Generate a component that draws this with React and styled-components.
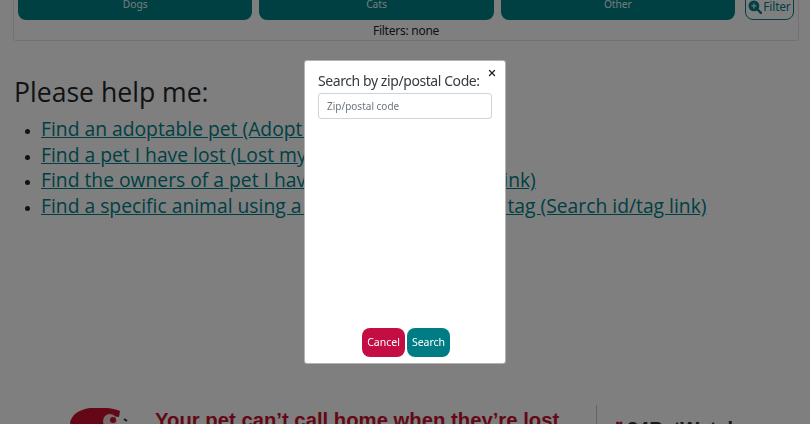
import styled, { createGlobalStyle } from 'styled-components'
import { X } from 'lucide-react'

const GlobalStyle = createGlobalStyle`
  html, body { margin: 0; padding: 0; height: 100%; overflow: hidden; background: #fff; }
  #root { height: 100%; }
  * { box-sizing: border-box; }
`

const Page = styled.div`
  width: 810px;
  height: 424px;
  overflow: hidden;
  font-family: "Noto Sans", sans-serif;
  color: #212529;
`

const FilterCard = styled.div`
  margin: -20px 11px 0 13px;
  height: 61px;
  border: 1px solid #dee2e6;
  border-radius: 3px;
  padding: 0 4px;
`

const TabRow = styled.div`
  display: flex;
  height: 39px;
  gap: 7px;
`

const Tab = styled.button`
  flex: 1;
  border: none;
  border-radius: 0 0 8px 8px;
  background: #008087;
  color: #f0f4f4;
  font: 400 10.2px/12px "Noto Sans", sans-serif;
  height: 39px;
  display: flex;
  justify-content: center;
  align-items: flex-start;
  padding: 17px 0 0;
`

const FilterButton = styled.button`
  width: 49px;
  height: 39px;
  margin-left: 3px;
  border: 1px solid #008087;
  border-radius: 0 0 8px 8px;
  background: transparent;
  color: #008087;
  font: 400 12px/14px "Noto Sans", sans-serif;
  letter-spacing: -0.2px;
  display: flex;
  align-items: flex-end;
  justify-content: center;
  gap: 1px;
  padding: 0 0 5px;
  white-space: nowrap;
`

const FilterStatus = styled.div`
  text-align: center;
  font: 400 12px/21px "Noto Sans", sans-serif;
  letter-spacing: -0.25px;
  color: #212529;
`

const Section = styled.section`
  padding: 33px 14px 0;
`

const Heading = styled.h2`
  margin: 0 0 6px;
  font: 400 26.6px/36px "Open Sans", sans-serif;
`

const LinkList = styled.ul`
  margin: 0;
  padding-left: 27px;
`

const LinkItem = styled.li`
  font: 400 19.3px/25.6px "Open Sans", sans-serif;
  white-space: nowrap;
  &::marker { font-size: 13px; }
`

const PetLink = styled.a`
  color: #008087;
  text-decoration: underline;
`

const Banner = styled.div`
  display: flex;
  align-items: flex-start;
  margin-top: 187px;
  padding-left: 70px;
  height: 30px;
`

const PhoneIcon = styled.svg`
  width: 62px;
  height: 40px;
  flex: none;
  margin-top: 3px;
`

const BannerText = styled.div`
  margin-left: 23px;
  width: 441px;
  padding-top: 3px;
  color: #c8102e;
  font: 700 20.3px/24px "Liberation Sans", sans-serif;
  white-space: nowrap;
`

const Divider = styled.div`
  width: 1px;
  height: 40px;
  background: #c9c9c9;
`

const WatchLogo = styled.div`
  margin-left: 16px;
  padding-top: 12px;
  color: #333;
  font: 700 20px/24px "Liberation Sans", sans-serif;
  display: flex;
  align-items: flex-start;
  gap: 2px;
  white-space: nowrap;
`

const PawIcon = styled.svg`
  width: 12px;
  height: 12px;
  margin-top: 4px;
  flex: none;
`

const Overlay = styled.div`
  position: fixed;
  inset: 0;
  background: rgba(0, 0, 0, 0.5);
  display: flex;
  align-items: center;
  justify-content: center;
`

const Modal = styled.div`
  position: relative;
  width: 202px;
  height: 304px;
  background: #fff;
  border: 1px solid rgba(0, 0, 0, 0.3);
  border-radius: 3px;
  padding: 10px 13px 6px;
  display: flex;
  flex-direction: column;
`

const CloseButton = styled.button`
  position: absolute;
  top: 7px;
  right: 8px;
  border: none;
  background: none;
  padding: 0;
  width: 10px;
  height: 10px;
  color: #222;
  display: flex;
`

const ModalTitle = styled.div`
  font: 400 14px/19px "Noto Sans", sans-serif;
  letter-spacing: -0.42px;
  color: #343a40;
  margin-bottom: 3px;
  white-space: nowrap;
`

const ZipInput = styled.input`
  width: 174px;
  height: 26px;
  border: 1px solid #ced4da;
  border-radius: 3px;
  padding: 0 8px;
  font: 400 10px "Noto Sans", sans-serif;
  &::placeholder { color: #6c757d; opacity: 1; }
`

const Actions = styled.div`
  margin-top: auto;
  padding-left: 2px;
  display: flex;
  justify-content: center;
  gap: 2px;
`

const ActionButton = styled.button`
  width: 43px;
  height: 29px;
  border: none;
  border-radius: 8px;
  background: ${props => (props.$danger ? '#c40d42' : '#007c85')};
  color: #fff;
  font: 400 10.5px "Noto Sans", sans-serif;
  padding: 0 0 2px;
`

const links = [
  'Find an adoptable pet (Adopt a pet link)',
  'Find a pet I have lost (Lost my pet link)',
  'Find the owners of a pet I have found (Found a pet link)',
  'Find a specific animal using a microchip or a license tag (Search id/tag link)',
]

const App = () => {
  return (
    <>
      <GlobalStyle />
      <Page>
        <FilterCard>
          <TabRow>
            <Tab>Dogs</Tab>
            <Tab>Cats</Tab>
            <Tab>Other</Tab>
            <FilterButton>
              <svg width="14" height="14" viewBox="0 0 13 13" fill="none">
                <circle cx="5.5" cy="5.5" r="5" fill="#008087" />
                <path d="M3.2 5.5h4.6M5.5 3.2v4.6" stroke="#d5e6e6" strokeWidth="1.3" />
                <path d="M9 9l3.2 3.2" stroke="#008087" strokeWidth="2.2" strokeLinecap="round" />
              </svg>
              Filter
            </FilterButton>
          </TabRow>
          <FilterStatus>Filters: none</FilterStatus>
        </FilterCard>
        <Section>
          <Heading>Please help me:</Heading>
          <LinkList>
            {links.map(text => (
              <LinkItem key={text}>
                <PetLink href="#">{text}</PetLink>
              </LinkItem>
            ))}
          </LinkList>
        </Section>
        <Banner>
          <PhoneIcon viewBox="0 0 62 40">
            <path d="M0 14 C3 6 8 2 20 0 C32 -1 44 0 50 3 L49 9 C42 8 38 10 36 14 C32 24 24 30 14 34 C8 30 2 24 0 14Z" fill="#c8102e" />
            <circle cx="40" cy="13" r="7" fill="#f3d9d9" />
            <circle cx="43" cy="12" r="3" fill="#c8102e" />
            <path d="M54 11l3 2" stroke="#333" strokeWidth="2" />
          </PhoneIcon>
          <BannerText>Your pet can’t call home when they’re lost</BannerText>
          <Divider />
          <WatchLogo>
            <PawIcon viewBox="0 0 12 12" fill="#c8102e">
              <circle cx="2" cy="5" r="1.5" />
              <circle cx="4.6" cy="2" r="1.6" />
              <circle cx="7.8" cy="2" r="1.6" />
              <circle cx="10.2" cy="5" r="1.5" />
              <ellipse cx="6.1" cy="8" rx="3.2" ry="2.8" />
            </PawIcon>
            24PetWatch
          </WatchLogo>
        </Banner>
      </Page>
      <Overlay>
        <Modal>
          <CloseButton aria-label="Close">
            <X size={10} strokeWidth={3} />
          </CloseButton>
          <ModalTitle>Search by zip/postal Code:</ModalTitle>
          <ZipInput placeholder="Zip/postal code" />
          <Actions>
            <ActionButton $danger>Cancel</ActionButton>
            <ActionButton>Search</ActionButton>
          </Actions>
        </Modal>
      </Overlay>
    </>
  )
}

export default App
